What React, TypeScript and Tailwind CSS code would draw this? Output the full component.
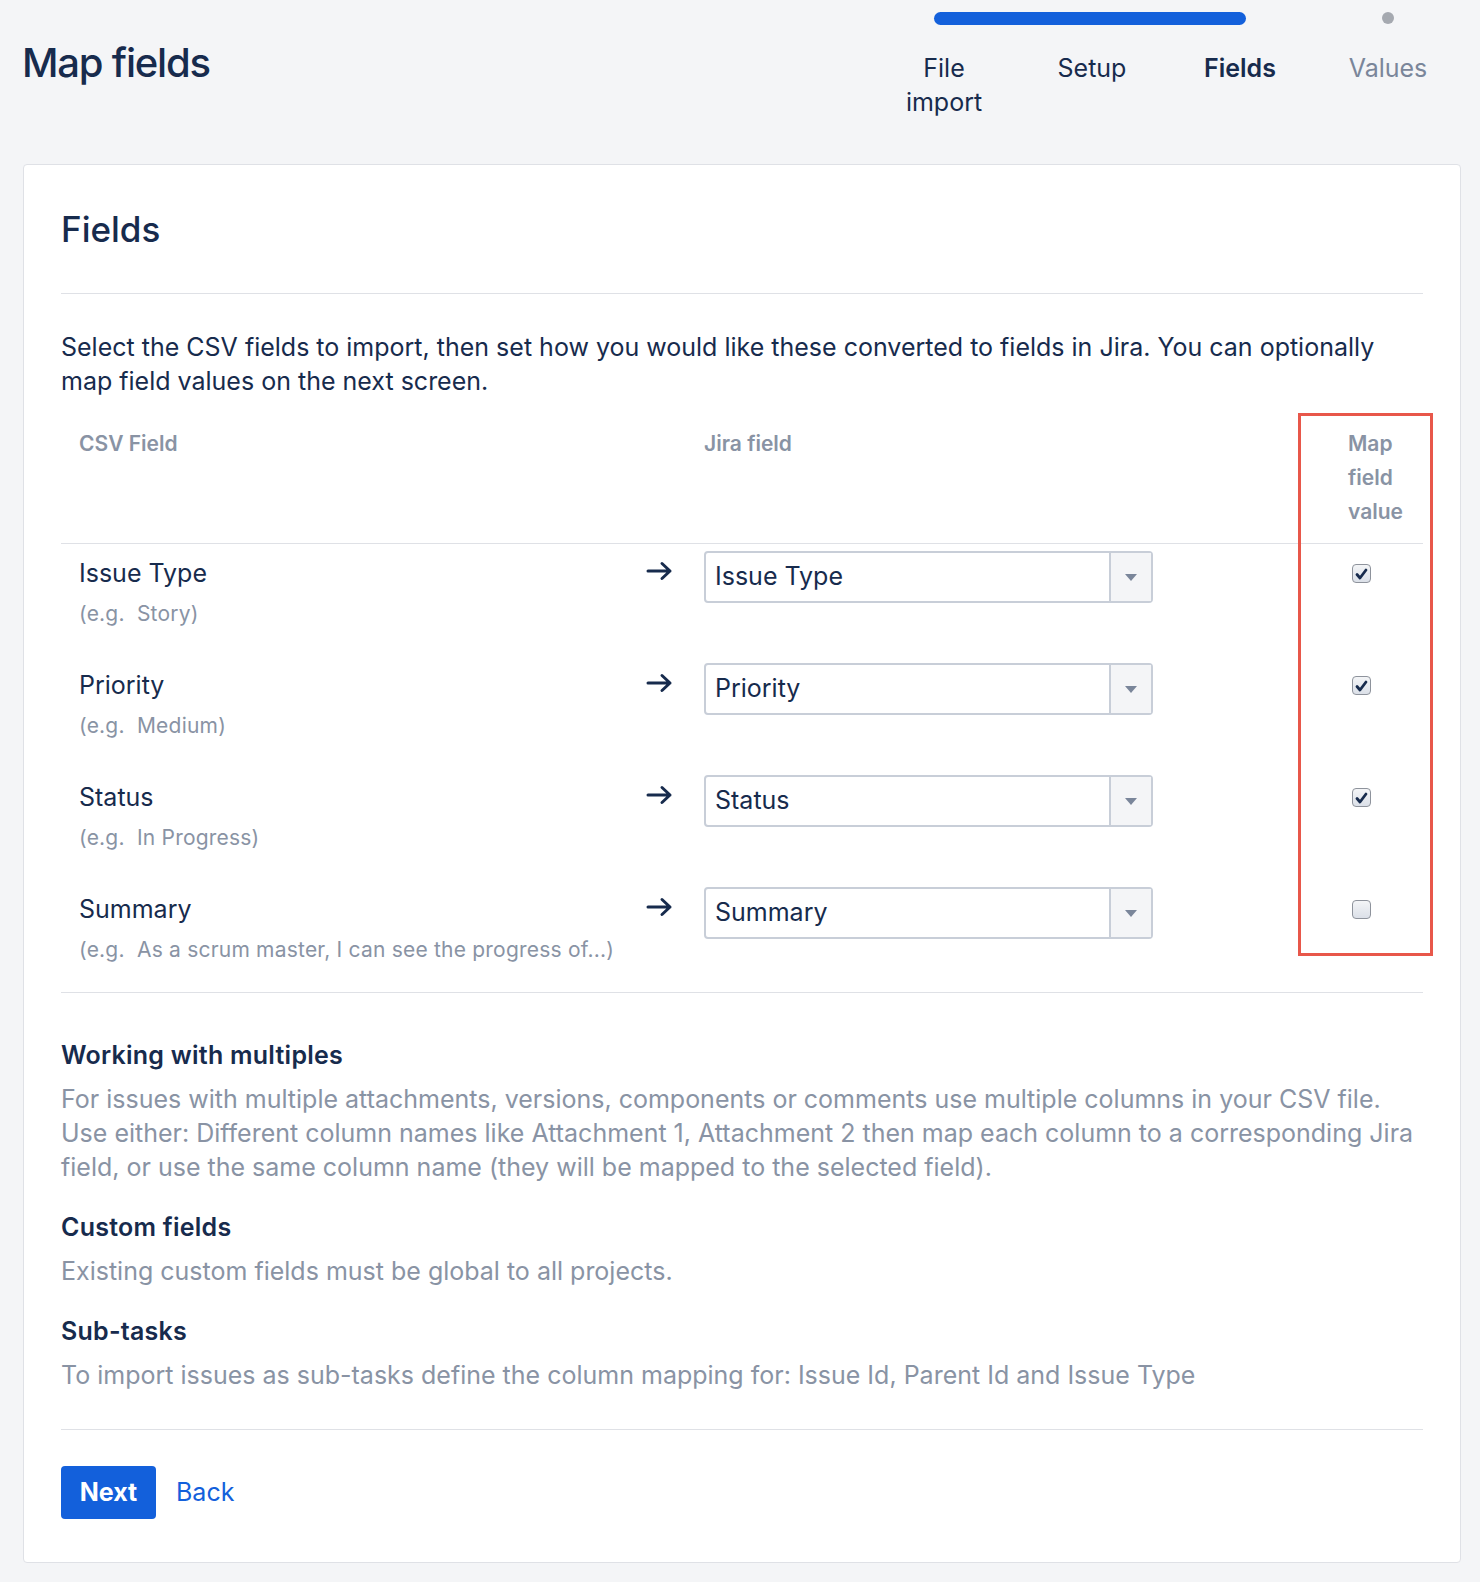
import React from 'react'

const rows = [
  { name: 'Issue Type', example: '(e.g.\u00a0 Story)', field: 'Issue Type', mapped: true },
  { name: 'Priority', example: '(e.g.\u00a0 Medium)', field: 'Priority', mapped: true },
  { name: 'Status', example: '(e.g.\u00a0 In Progress)', field: 'Status', mapped: true },
  {
    name: 'Summary',
    example: '(e.g.\u00a0 As a scrum master, I can see the progress of...)',
    field: 'Summary',
    mapped: false,
  },
]

function Arrow() {
  return (
    <svg width="28" height="20" viewBox="0 0 28 20" fill="none">
      <path
        d="M2 10h22M16 2.5l8 7.5-8 7.5"
        stroke="#172b4d"
        strokeWidth="3"
        strokeLinecap="round"
        strokeLinejoin="round"
      />
    </svg>
  )
}

function Checkbox({ checked }: { checked: boolean }) {
  return (
    <span className="flex h-[19px] w-[19px] items-center justify-center rounded-[4px] border border-[#8e939c] bg-gradient-to-b from-[#f4f5f7] to-[#dbe0e8]">
      {checked && (
        <svg width="13" height="12" viewBox="0 0 13 12" fill="none">
          <path
            d="M2 6.5l3 3.5L11 2"
            stroke="#172b4d"
            strokeWidth="2.8"
            strokeLinecap="round"
            strokeLinejoin="round"
          />
        </svg>
      )}
    </span>
  )
}

function Select({ value }: { value: string }) {
  return (
    <div className="flex h-[52px] w-[449px] rounded-[4px] border-2 border-[#c8ced8] bg-white">
      <div className="flex flex-1 items-center pl-[9px] text-[25px] text-[#172b4d]">{value}</div>
      <div className="flex w-[42px] items-center justify-center border-l-2 border-[#c8ced8] bg-[#f4f5f7]">
        <svg width="12" height="7" viewBox="0 0 12 7">
          <path d="M0 0h12L6 7z" fill="#7a869a" />
        </svg>
      </div>
    </div>
  )
}

export default function App() {
  return (
    <div className="min-h-screen bg-[#f4f5f7] pb-[19px] font-['Inter',sans-serif] text-[#172b4d]">
      <header className="flex h-[164px] items-start justify-between pl-[22px] pr-[18px]">
        <h1 className="mt-[39px] text-[40px] leading-[48px] font-medium tracking-[-0.03em]">Map fields</h1>

        <nav className="w-[592px]">
          <div className="flex h-[37px] items-center pb-[1px]">
            <div className="ml-[64px] h-[13px] w-[312px] rounded-full bg-[#1360db]" />
            <div className="ml-[136px] h-[12px] w-[12px] rounded-full bg-[#a5a9b0]" />
          </div>
          <ol className="mt-[14px] grid grid-cols-4 text-center text-[25px] leading-[34px]">
            <li>
              File
              <br />
              import
            </li>
            <li>Setup</li>
            <li className="font-semibold">Fields</li>
            <li className="text-[#7a869a]">Values</li>
          </ol>
        </nav>
      </header>

      <main className="ml-[23px] mr-[19px] rounded-[4px] border border-[#dfe1e6] bg-white px-[37px] pt-[44px] pb-[43px]">
        <h2 className="text-[35px] leading-[40px] font-medium">Fields</h2>
        <hr className="mt-[44px] border-[#dfe1e6]" />

        <p className="mt-[36px] text-[25px] leading-[34px]">
          Select the CSV fields to import, then set how you would like these converted to fields in Jira. You can
          optionally map field values on the next screen.
        </p>

        <div className="relative mt-[29px]">
          <div className="grid grid-cols-[585px_58px_594px_125px] border-b border-[#dfe1e6] pb-[14px] text-[21px] leading-[34px] font-semibold text-[#8993a4]">
            <div className="pl-[18px]">CSV Field</div>
            <div />
            <div>Jira field</div>
            <div className="w-[96px] pl-[50px]">Map field value</div>
          </div>

          {rows.map((row) => (
            <div key={row.name} className="grid h-[112px] grid-cols-[585px_58px_594px_125px]">
              <div className="pt-[12px] pl-[18px]">
                <div className="text-[25px] leading-[34px]">{row.name}</div>
                <div className="mt-[7px] text-[21px] leading-[34px] tracking-[0.01em] text-[#8993a4]">
                  {row.example}
                </div>
              </div>
              <div className="pt-[17px]">
                <Arrow />
              </div>
              <div className="pt-[7px]">
                <Select value={row.field} />
              </div>
              <div className="pt-[20px] pl-[54px]">
                <Checkbox checked={row.mapped} />
              </div>
            </div>
          ))}

          <div className="border-t border-[#dfe1e6]" />

          <div className="pointer-events-none absolute top-[-14px] left-[1237px] h-[543px] w-[135px] border-[3px] border-[#e8574a]" />
        </div>

        <section className="mt-[45px] text-[25px] leading-[34px]">
          <h3 className="font-semibold tracking-[0.01em]">Working with multiples</h3>
          <p className="mt-[10px] text-[#8993a4]">
            For issues with multiple attachments, versions, components or comments use multiple columns in your CSV
            file. Use either: Different column names like Attachment 1, Attachment 2 then map each column to a
            corresponding Jira field, or use the same column name (they will be mapped to the selected field).
          </p>

          <h3 className="mt-[26px] font-semibold tracking-[0.01em]">Custom fields</h3>
          <p className="mt-[10px] text-[#8993a4]">Existing custom fields must be global to all projects.</p>

          <h3 className="mt-[26px] font-semibold tracking-[0.01em]">Sub-tasks</h3>
          <p className="mt-[10px] text-[#8993a4]">
            To import issues as sub-tasks define the column mapping for: Issue Id, Parent Id and Issue Type
          </p>
        </section>

        <hr className="mt-[37px] border-[#dfe1e6]" />

        <div className="mt-[36px] flex items-center gap-[20px]">
          <button className="h-[53px] w-[95px] rounded-[4px] bg-[#1360db] text-[25px] font-bold text-white">
            Next
          </button>
          <a href="#" className="text-[25px] text-[#1360db]">
            Back
          </a>
        </div>
      </main>
    </div>
  )
}
